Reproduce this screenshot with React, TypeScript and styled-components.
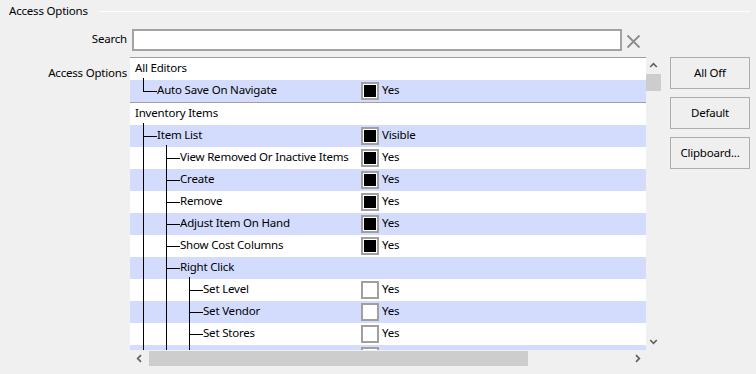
import * as React from 'react'
import styled, { createGlobalStyle } from 'styled-components'

const GlobalStyle = createGlobalStyle`
  html, body {
    margin: 0;
    padding: 0;
    background: #f0f0f0;
  }
`

type Guide = 'pipe' | 'tee' | 'elbow'

interface Option {
  label: string
  guides: Guide[]
  check?: boolean
  value?: string
}

const groups: Option[][] = [
  [
    { label: 'All Editors', guides: [] },
    { label: 'Auto Save On Navigate', guides: ['elbow'], check: true, value: 'Yes' }
  ],
  [
    { label: 'Inventory Items', guides: [] },
    { label: 'Item List', guides: ['tee'], check: true, value: 'Visible' },
    { label: 'View Removed Or Inactive Items', guides: ['pipe', 'tee'], check: true, value: 'Yes' },
    { label: 'Create', guides: ['pipe', 'tee'], check: true, value: 'Yes' },
    { label: 'Remove', guides: ['pipe', 'tee'], check: true, value: 'Yes' },
    { label: 'Adjust Item On Hand', guides: ['pipe', 'tee'], check: true, value: 'Yes' },
    { label: 'Show Cost Columns', guides: ['pipe', 'tee'], check: true, value: 'Yes' },
    { label: 'Right Click', guides: ['pipe', 'tee'] },
    { label: 'Set Level', guides: ['pipe', 'pipe', 'tee'], check: false, value: 'Yes' },
    { label: 'Set Vendor', guides: ['pipe', 'pipe', 'tee'], check: false, value: 'Yes' },
    { label: 'Set Stores', guides: ['pipe', 'pipe', 'tee'], check: false, value: 'Yes' },
    { label: 'Set Discontinued', guides: ['pipe', 'pipe', 'tee'], check: false, value: 'Yes' },
    { label: 'Set Category', guides: ['pipe', 'pipe', 'elbow'], check: false, value: 'Yes' }
  ]
]

const Page = styled.div`
  box-sizing: border-box;
  width: 756px;
  height: 374px;
  padding: 0 6px 0 9px;
  background: #f0f0f0;
  color: #000;
  font-family: 'Noto Sans', 'Open Sans', sans-serif;
  font-size: 11.5px;
  letter-spacing: -0.2px;
  overflow: hidden;
`

const GroupHeader = styled.div`
  display: flex;
  align-items: center;
  height: 22px;
`

const GroupTitle = styled.span`
  line-height: 22px;
`

const Rule = styled.div`
  flex: 1;
  height: 1px;
  margin-left: 11px;
  background: #fff;
`

const Form = styled.div`
  display: grid;
  grid-template-columns: 121px 531px 89px;
  grid-template-rows: 22px 309px;
  row-gap: 6px;
  margin-top: 7px;
`

const FieldLabel = styled.div<{ $top?: number }>`
  text-align: right;
  padding-right: 3px;
  padding-top: ${ p => p.$top || 0 }px;
  line-height: 19px;
`

const SearchCell = styled.div`
  display: flex;
  align-items: center;
  gap: 4px;
  padding-left: 2px;
`

const SearchInput = styled.input`
  box-sizing: border-box;
  width: 490px;
  height: 22px;
  margin: 0;
  border: 2px solid #a3a3a3;
  background: #fff;
  outline: none;
`

const ClearIcon = styled.svg`
  display: block;
  margin-top: 2px;
`

const ListBox = styled.div`
  display: grid;
  grid-template-columns: 516px 15px;
  grid-template-rows: 293px 16px;
`

const Viewport = styled.div`
  overflow: hidden;
  border-top: 1px solid #a0a0a0;
  background: #fff;
`

const Group = styled.div`
  border-bottom: 1px solid #a0a0a0;
`

const Row = styled.div<{ $alt: boolean }>`
  display: grid;
  grid-template-columns: 231px 18px auto;
  align-items: center;
  height: 22px;
  background: ${ p => p.$alt ? '#d3dcfc' : '#fff' };
`

const NameCell = styled.div`
  display: flex;
  align-items: flex-start;
  height: 22px;
  padding-left: 4px;
  white-space: nowrap;
`

const GuideCell = styled.span<{ $kind: Guide }>`
  position: relative;
  flex: 0 0 23px;
  height: 22px;

  &::before {
    content: '';
    position: absolute;
    left: 9px;
    top: ${ p => p.$kind === 'pipe' ? '0' : '-2px' };
    width: 1px;
    height: ${ p => p.$kind === 'elbow' ? '13px' : p.$kind === 'tee' ? '24px' : '22px' };
    background: #000;
  }

  &::after {
    content: '';
    display: ${ p => p.$kind === 'pipe' ? 'none' : 'block' };
    position: absolute;
    left: 9px;
    top: 11px;
    width: 14px;
    height: 1px;
    background: #000;
  }
`

const Name = styled.span<{ $root: boolean }>`
  line-height: 20px;
  padding-left: ${ p => p.$root ? 1 : 0 }px;
`

const CheckBox = styled.span<{ $on: boolean }>`
  box-sizing: border-box;
  display: block;
  width: 18px;
  height: 18px;
  padding: 1px;
  border: 2px solid #a0a0a0;
  background: #fff;

  &::after {
    content: '';
    display: ${ p => p.$on ? 'block' : 'none' };
    width: 12px;
    height: 12px;
    background: #000;
  }
`

const Value = styled.span`
  align-self: start;
  padding-left: 3px;
  line-height: 20px;
`

const VScroll = styled.div`
  display: flex;
  flex-direction: column;
  background: #f0f0f0;
`

const HScroll = styled.div`
  display: flex;
  align-items: center;
  background: #f0f0f0;
`

const ArrowButton = styled.div<{ $w: number, $h: number }>`
  display: flex;
  align-items: center;
  justify-content: center;
  flex: 0 0 auto;
  width: ${ p => p.$w }px;
  height: ${ p => p.$h }px;
`

const VThumb = styled.div`
  height: 17px;
  background: #cdcdcd;
`

const HThumb = styled.div`
  width: 379px;
  height: 15px;
  margin-left: 1px;
  background: #cdcdcd;
`

const Spacer = styled.div`
  flex: 1;
`

const ButtonColumn = styled.div`
  display: flex;
  flex-direction: column;
  gap: 8px;
  padding-left: 9px;
`

const Button = styled.button`
  box-sizing: border-box;
  width: 80px;
  height: 32px;
  margin: 0;
  padding: 0 0 1px;
  border: 1px solid #adadad;
  background: #efefef;
  color: #000;
  font: inherit;
  letter-spacing: inherit;
`

const Chevron = ({ dir }: { dir: 'up' | 'down' | 'left' | 'right' }) => {
  const rot = { up: 0, right: 90, down: 180, left: 270 }[dir]
  return (
    <svg width="9" height="9" viewBox="0 0 9 9">
      <path d="M1.2 6 L4.5 2.7 L7.8 6" fill="none" stroke="#606060" strokeWidth="1.7"
            transform={ `rotate(${ rot } 4.5 4.5)` }/>
    </svg>
  )
}

const OptionRow = ({ option, alt }: { option: Option, alt: boolean }) => (
  <Row $alt={ alt }>
    <NameCell>
      { option.guides.map((g, i) => <GuideCell key={ i } $kind={ g }/>) }
      <Name $root={ option.guides.length === 0 }>{ option.label }</Name>
    </NameCell>
    { option.check !== undefined ? <CheckBox $on={ option.check }/> : <span/> }
    { option.value ? <Value>{ option.value }</Value> : <span/> }
  </Row>
)

const App = () => (
  <Page>
    <GlobalStyle/>
    <GroupHeader>
      <GroupTitle>Access Options</GroupTitle>
      <Rule/>
    </GroupHeader>
    <Form>
      <FieldLabel>Search</FieldLabel>
      <SearchCell>
        <SearchInput type="text"/>
        <ClearIcon width="15" height="15" viewBox="0 0 15 15">
          <path d="M1.5 1.5 L13.5 13.5 M13.5 1.5 L1.5 13.5" stroke="#8c8c8c" strokeWidth="1.8"/>
        </ClearIcon>
      </SearchCell>
      <div/>

      <FieldLabel $top={ 6 }>Access Options</FieldLabel>
      <ListBox>
        <Viewport>
          { groups.map((rows, gi) => (
            <Group key={ gi }>
              { rows.map((o, i) => <OptionRow key={ o.label } option={ o } alt={ i % 2 === 1 }/>) }
            </Group>
          )) }
        </Viewport>
        <VScroll>
          <ArrowButton $w={ 15 } $h={ 17 }><Chevron dir="up"/></ArrowButton>
          <VThumb/>
          <Spacer/>
          <ArrowButton $w={ 15 } $h={ 17 }><Chevron dir="down"/></ArrowButton>
        </VScroll>
        <HScroll>
          <ArrowButton $w={ 18 } $h={ 16 }><Chevron dir="left"/></ArrowButton>
          <HThumb/>
          <Spacer/>
          <ArrowButton $w={ 17 } $h={ 16 }><Chevron dir="right"/></ArrowButton>
        </HScroll>
        <HScroll/>
      </ListBox>
      <ButtonColumn>
        <Button>All Off</Button>
        <Button>Default</Button>
        <Button>Clipboard...</Button>
      </ButtonColumn>
    </Form>
  </Page>
)

export default App
